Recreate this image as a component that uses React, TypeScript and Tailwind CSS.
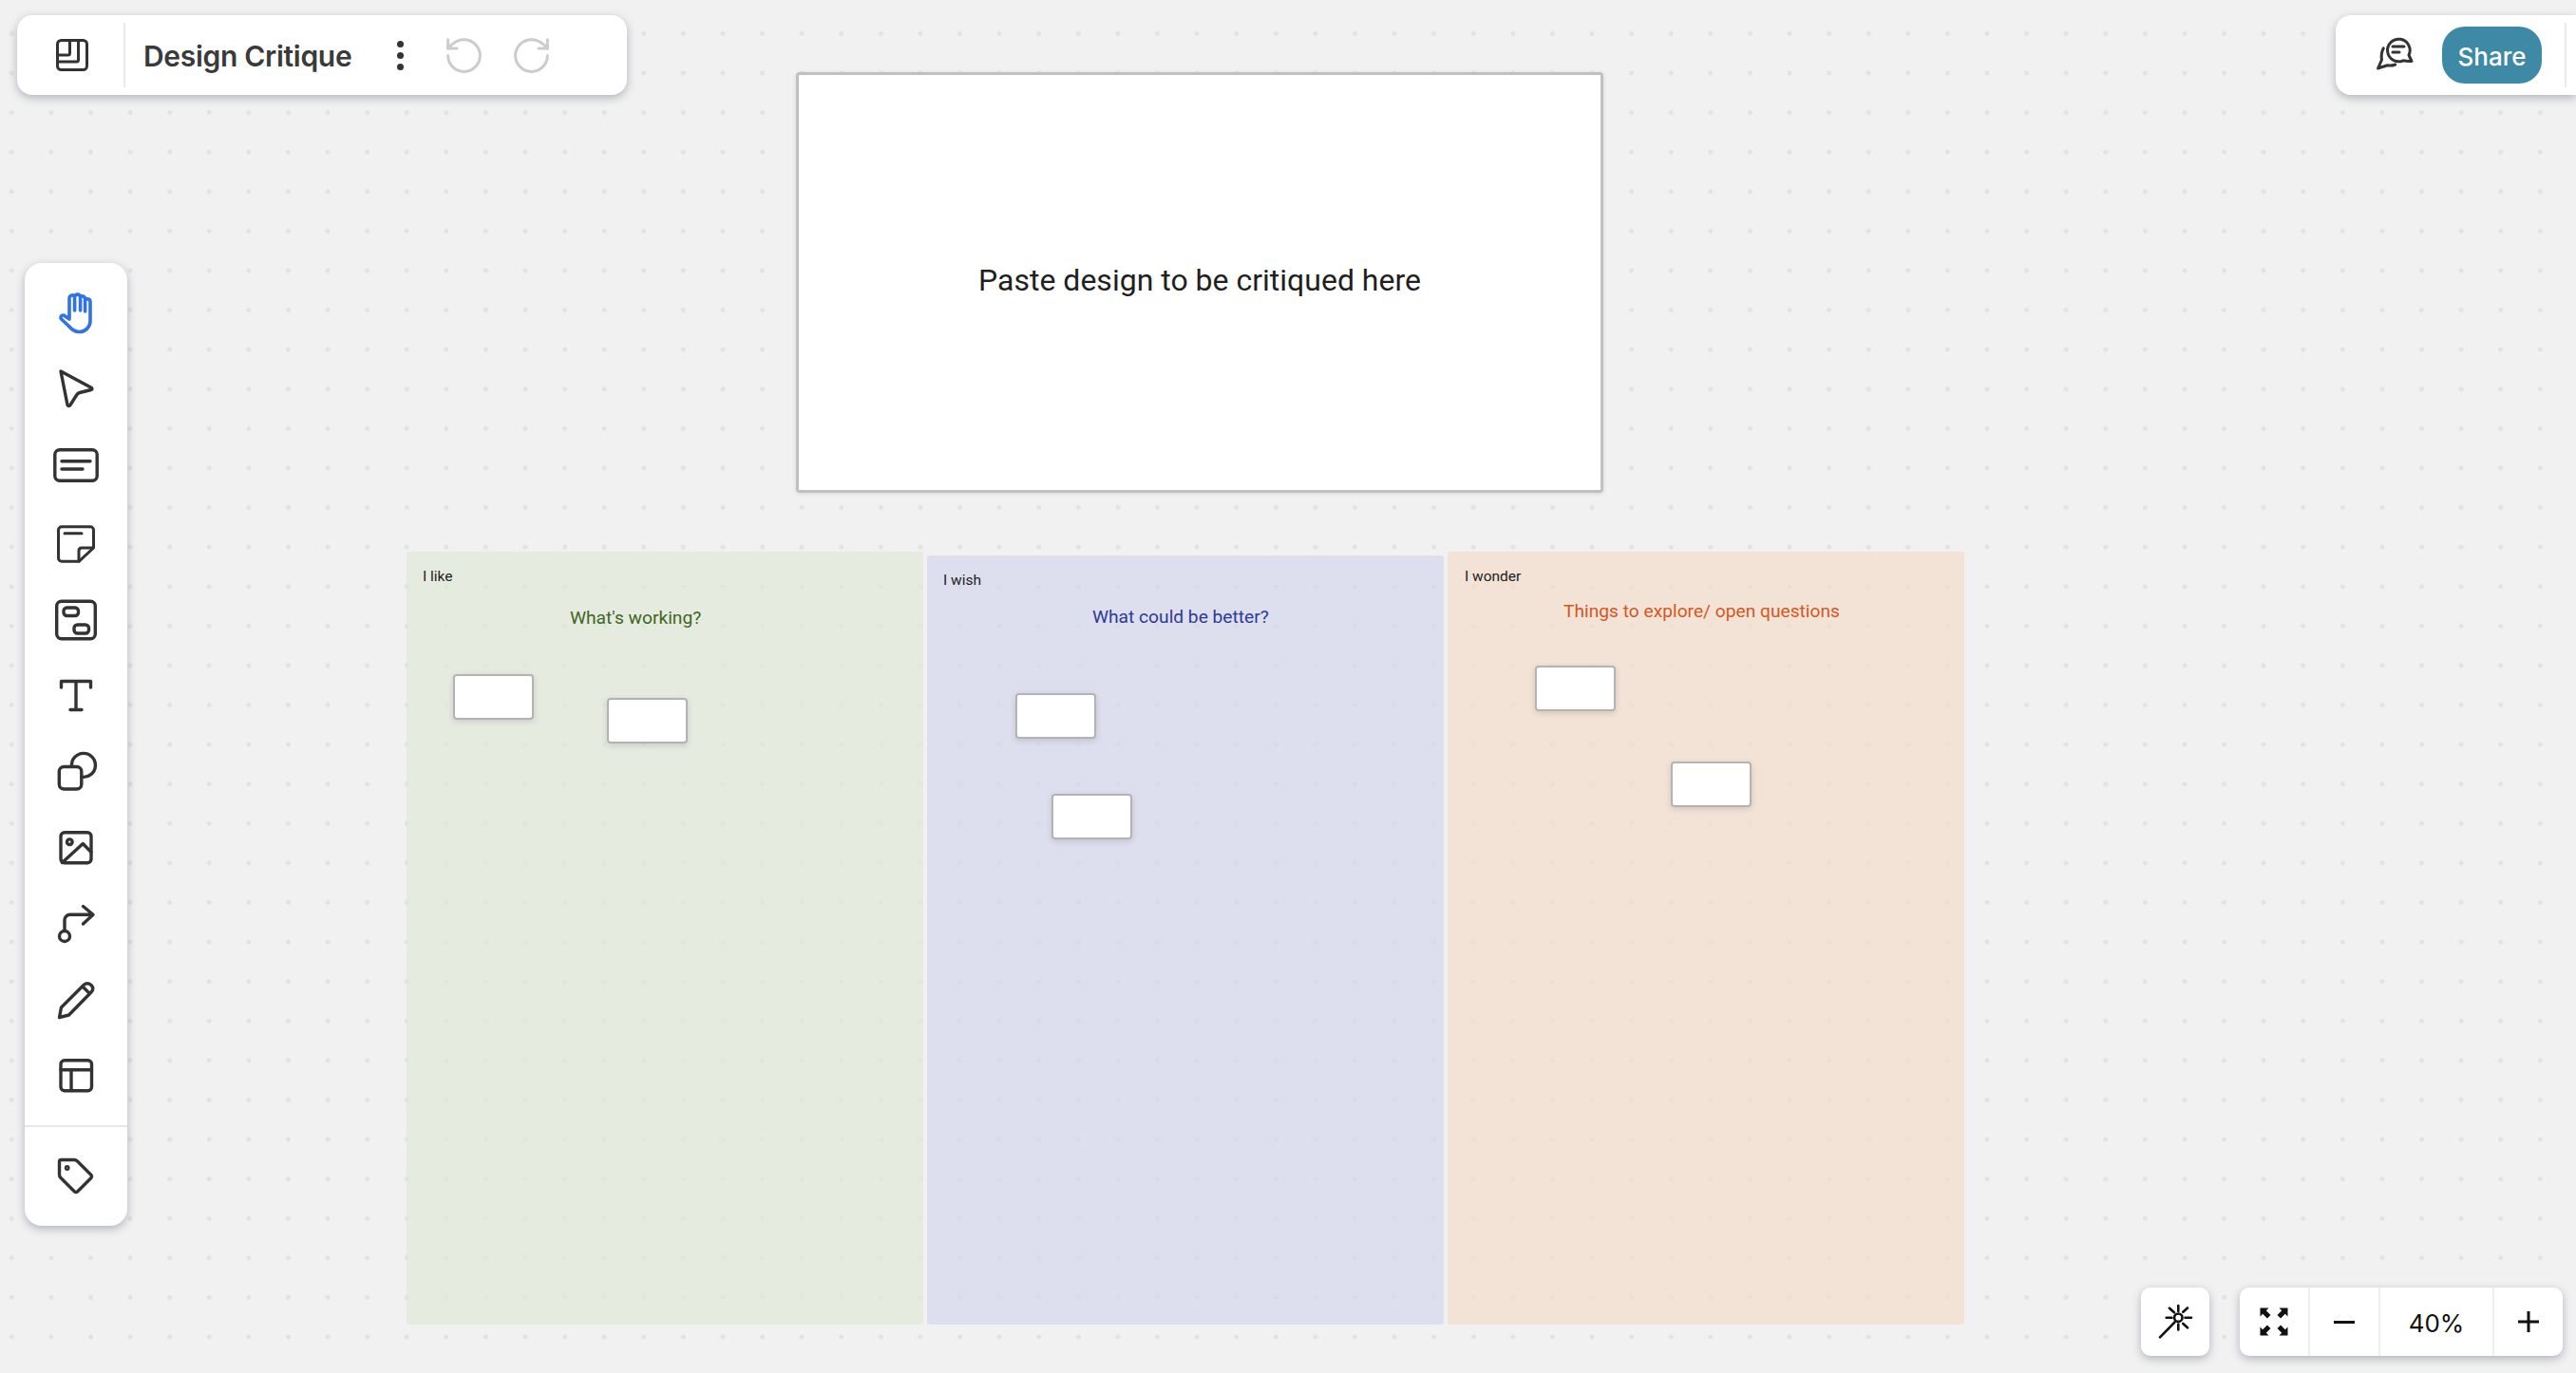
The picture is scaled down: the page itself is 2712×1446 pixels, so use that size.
import { RotateCcw, RotateCw } from "lucide-react"
import React from "react"

function ToolIcon({ children, color = "#333333", sw = 3.4, dy = 0 }: { children: React.ReactNode; color?: string; sw?: number; dy?: number }) {
    return (
        <svg width="48" height="48" viewBox={`0 ${-dy} 48 48`} overflow="visible" fill="none" stroke={color} strokeWidth={sw} strokeLinecap="round" strokeLinejoin="round">
            {children}
        </svg>
    )
}

const tools: { key: string; color?: string; sw?: number; dy?: number; shape: React.ReactNode }[] = [
    {
        key: "hand",
        color: "#2f73e6",
        sw: 3.6,
        shape: (
            <>
                <path d="M17 30V9a3.2 3.2 0 0 1 5.6-2a3.2 3.2 0 0 1 6 .5a3.2 3.2 0 0 1 5 3.5a3 3 0 0 1 5.4 2V33a11.5 11.5 0 0 1-11.5 11.5c-5 0-8-2.5-11-6L8.5 31a2.5 2.5 0 0 1 4-3L17 31" />
                <path d="M22.6 8V22M28.6 7.500V22M33.600 11V23" />
            </>
        ),
    },
    { key: "select", dy: -1, shape: <path d="M8 6L40.500 23.500Q41.500 25 40 25.500L28 28.500Q26 29 25 30.500L18 41.500Q16 43.500 15 41.500Z" /> },
    {
        key: "textbox",
        shape: (
            <>
                <rect x="1.800" y="7.700" width="44.400" height="32.600" rx="5" />
                <path d="M9 19.700H39M9 28H31" />
            </>
        ),
    },
    {
        key: "sticky",
        sw: 3,
        dy: 3,
        shape: (
            <>
                <path d="M9 5.700H39a3.500 3.500 0 0 1 3.500 3.500V28L27 42.300H9a3.500 3.500 0 0 1-3.500-3.500V9.200A3.500 3.500 0 0 1 9 5.700Z" />
                <path d="M42 28H30Q27 28 27 31V42M12 12.700H30" />
            </>
        ),
    },
    {
        key: "frame",
        dy: 2,
        shape: (
            <>
                <rect x="3.700" y="4.200" width="40.600" height="39.600" rx="5" />
                <rect x="11" y="11" width="15.500" height="8.500" rx="3.500" />
                <rect x="22" y="29" width="15.500" height="9" rx="3.500" />
            </>
        ),
    },
    { key: "text", dy: 1.5, shape: <path d="M8.500 15.500V9H39.500V15.500M24 9V39M18 39H30" /> },
    {
        key: "shapes",
        shape: (
            <>
                <rect x="6.300" y="19.500" width="23.500" height="23.500" rx="5" />
                <path d="M19.500 19A12.500 12.500 0 1 1 30 30.200" />
            </>
        ),
    },
    {
        key: "image",
        dy: 1,
        shape: (
            <>
                <rect x="8" y="7.700" width="32" height="32" rx="4" />
                <circle cx="17.300" cy="17.700" r="2.800" />
                <path d="M9.500 39.500L31.300 19.500L40 28.500" />
            </>
        ),
    },
    {
        key: "connector",
        dy: 1,
        shape: (
            <>
                <circle cx="12" cy="37" r="5.500" />
                <path d="M12 31V20a5.700 5.700 0 0 1 5.700-5.700H41M31.500 5.500L42 14.300L31.500 24" />
            </>
        ),
    },
    {
        key: "pen",
        shape: <path d="M6.500 42.500L8.500 32L32 8.500Q36 5 40 8.500Q43.500 12 40 16L16.500 40ZM31.500 10.500L38.500 17.500" />,
    },
    {
        key: "layout",
        shape: (
            <>
                <rect x="8" y="7.700" width="32.500" height="32" rx="4" />
                <path d="M8 17.700H40.500M19 17.700V39.500" />
            </>
        ),
    },
]

const cardClass = "absolute w-[85px] h-[48px] bg-white border-2 border-[#b3b3b3] rounded-[4px] shadow-[0_2px_6px_rgba(60,60,60,0.18)]"
const barShadow = "shadow-[0_3px_10px_rgba(70,80,100,0.38)]"

function FitIcon() {
    const corner = "M0.500 0.500H9.500L6.800 3.200L11.500 7.900L7.900 11.500L3.200 6.800L0.500 9.500Z"
    return (
        <svg width="30" height="30" viewBox="0 0 30 30" fill="#111111">
            <path d={corner} />
            <path d={corner} transform="rotate(90 15 15)" />
            <path d={corner} transform="rotate(180 15 15)" />
            <path d={corner} transform="rotate(270 15 15)" />
        </svg>
    )
}

export default function App() {
    return (
        <div className="relative w-[2712px] h-[1446px] overflow-hidden bg-[#f1f1f1] bg-[radial-gradient(circle,#e2e2e2_2.2px,transparent_2.8px)] bg-[length:41.6px_41.6px] bg-[position:-8.5px_14.6px] font-[Roboto,sans-serif]">

            {/* board */}
            <div className="absolute left-[838px] top-[76px] w-[850px] h-[443px] pb-[5px] bg-white border-[3px] border-[#c0c0c0] rounded-[4px] shadow-[0_1px_4px_rgba(60,60,60,0.15)] flex items-center justify-center text-[32px] text-[#1f1f1f]">
                Paste design to be critiqued here
            </div>

            {/* like */}
            <div className="absolute left-[428px] top-[581px] w-[544px] h-[814px] bg-[#e1e8d9]/70 rounded-[3px]">
                <span className="absolute left-[17px] top-[15px] text-[15.5px] text-[#222]">I like</span>
                <span className="absolute left-[172px] top-[56px] text-[19.2px] text-[#3f6621]">What's working?</span>
                <div className={`${cardClass} left-[49px] top-[129px]`} />
                <div className={`${cardClass} left-[211px] top-[154px]`} />
            </div>

            {/* wish */}
            <div className="absolute left-[976px] top-[585px] w-[544px] h-[810px] bg-[#d4d7ed]/70 rounded-[3px]">
                <span className="absolute left-[17px] top-[15px] text-[15.5px] text-[#222]">I wish</span>
                <span className="absolute left-[174px] top-[51px] text-[19.2px] text-[#2d3a96]">What could be better?</span>
                <div className={`${cardClass} left-[93px] top-[145px]`} />
                <div className={`${cardClass} left-[131px] top-[251px]`} />
            </div>

            {/* wonder */}
            <div className="absolute left-[1524px] top-[581px] w-[544px] h-[814px] bg-[#f3ddcb]/70 rounded-[3px]">
                <span className="absolute left-[18px] top-[15px] text-[15.5px] text-[#222]">I wonder</span>
                <span className="absolute left-[122px] top-[49px] text-[19.2px] text-[#d4571f]">Things to explore/ open questions</span>
                <div className={`${cardClass} left-[92px] top-[120px]`} />
                <div className={`${cardClass} left-[235px] top-[221px]`} />
            </div>

            {/* top left bar */}
            <div className={`absolute left-[18px] top-[16px] w-[642px] h-[84px] bg-white rounded-[16px] ${barShadow} flex items-center pl-[38px] font-[Inter,sans-serif]`}>
                <svg width="40" height="40" viewBox="0 0 40 40" fill="none" stroke="#333333" strokeWidth="3" strokeLinejoin="round">
                    <rect x="4.500" y="4.500" width="31" height="31" rx="4" />
                    <path d="M4.500 20H15.500a2 2 0 0 0 2-2V4.500M4.500 27H24.500a2 2 0 0 0 2-2V4.500" />
                </svg>
                <div className="w-[2px] h-[68px] bg-[#e8e8e8] ml-[34px]" />
                <span className="ml-[19px] w-[220px] pt-[2px] text-[30px] font-semibold text-[#3a3a3a] whitespace-nowrap tracking-[-0.3px]">Design Critique</span>
                <div className="ml-[47px] flex flex-col gap-[5px]">
                    <div className="w-[7px] h-[7px] rounded-full bg-[#333]" />
                    <div className="w-[7px] h-[7px] rounded-full bg-[#333]" />
                    <div className="w-[7px] h-[7px] rounded-full bg-[#333]" />
                </div>
                <RotateCcw size={45} strokeWidth={1.6} color="#cccccc" className="ml-[41px]" />
                <RotateCw size={45} strokeWidth={1.6} color="#cccccc" className="ml-[26px]" />
            </div>

            {/* top right bar */}
            <div className={`absolute left-[2459px] top-[16px] w-[253px] h-[84px] bg-white rounded-l-[16px] ${barShadow} flex items-center pl-[41px] font-[Inter,sans-serif]`}>
                <svg width="44" height="44" viewBox="0 0 44 44" fill="none" stroke="#333333" strokeWidth="3" strokeLinecap="round" strokeLinejoin="round">
                    <path d="M30 27.800A11.800 11.800 0 1 1 36 22L39 28.500Q34 28.800 30 27.800Z" />
                    <path d="M19 13H31M19 19H26" />
                    <path d="M9.300 14.700C7 19 6.800 23 7.500 27L3.500 36C8 34.500 11 33.500 13.500 32.800C16.500 33.500 19 33 21.700 32" />
                </svg>
                <button className="ml-[27px] w-[105px] h-[60px] pt-[2px] rounded-[24px] bg-[#3e89a6] text-white text-[26px] font-medium">Share</button>
                <div className="ml-[24px] w-[2px] h-[68px] bg-[#e8e8e8]" />
            </div>

            {/* left toolbar */}
            <div className={`absolute left-[26px] top-[277px] w-[108px] h-[1014px] bg-white rounded-[18px] ${barShadow} flex flex-col items-center pt-[12px]`}>
                {tools.map((t) => (
                    <div key={t.key} className="h-[80.4px] w-full flex items-center justify-center shrink-0">
                        <ToolIcon color={t.color} sw={t.sw} dy={t.dy}>{t.shape}</ToolIcon>
                    </div>
                ))}
                <div className="w-full h-[2px] bg-[#e8e8e8] mt-[12px] shrink-0" />
                <div className="h-[99px] w-full flex items-center justify-center shrink-0">
                    <ToolIcon dy={1}>
                        <path d="M8.500 7.500H22Q24 7.500 25.500 9L39.500 23Q41.500 25 39.500 27L26 40.500Q24 42.500 22 40.500L8 26.500Q6.500 25 6.500 23V9.500Q6.500 7.500 8.500 7.500Z" />
                        <circle cx="14.700" cy="16" r="1.200" />
                    </ToolIcon>
                </div>
            </div>

            {/* wand */}
            <div className={`absolute left-[2254px] top-[1356px] w-[72px] h-[72px] bg-white rounded-[10px] ${barShadow} flex items-center justify-center`}>
                <svg width="40" height="40" viewBox="0 0 40 40" fill="none" stroke="#111111" strokeWidth="2.600" strokeLinecap="round">
                    <circle cx="23.300" cy="15.700" r="4.200" />
                    <path d="M23.300 3V9M30.500 15.700H37M10.700 15.700H16.500M23.300 22.500V28.500M28.300 9.700L33 5.500M14 5.700L19 10.300M28.300 22L33 26.300M19.500 20.500L4 36.300" />
                </svg>
            </div>

            {/* zoom controls */}
            <div className={`absolute left-[2358px] top-[1356px] w-[340px] h-[72px] bg-white rounded-[10px] ${barShadow} flex items-center text-[#111]`}>
                <div className="w-[72px] h-full flex items-center justify-center"><FitIcon /></div>
                <div className="w-[2px] h-full bg-[#efefef]" />
                <div className="w-[72px] h-full flex items-center justify-center">
                    <div className="w-[22px] h-[3px] bg-[#111]" />
                </div>
                <div className="w-[2px] h-full bg-[#efefef]" />
                <div className="w-[118px] h-full pt-[2px] flex items-center justify-center text-[26px] font-[Inter,sans-serif]">40%</div>
                <div className="w-[2px] h-full bg-[#efefef]" />
                <div className="flex-1 h-full flex items-center justify-center">
                    <svg width="24" height="24" viewBox="0 0 24 24" stroke="#111111" strokeWidth="3"><path d="M1 12H23M12 1V23" /></svg>
                </div>
            </div>
        </div>
    )
}
